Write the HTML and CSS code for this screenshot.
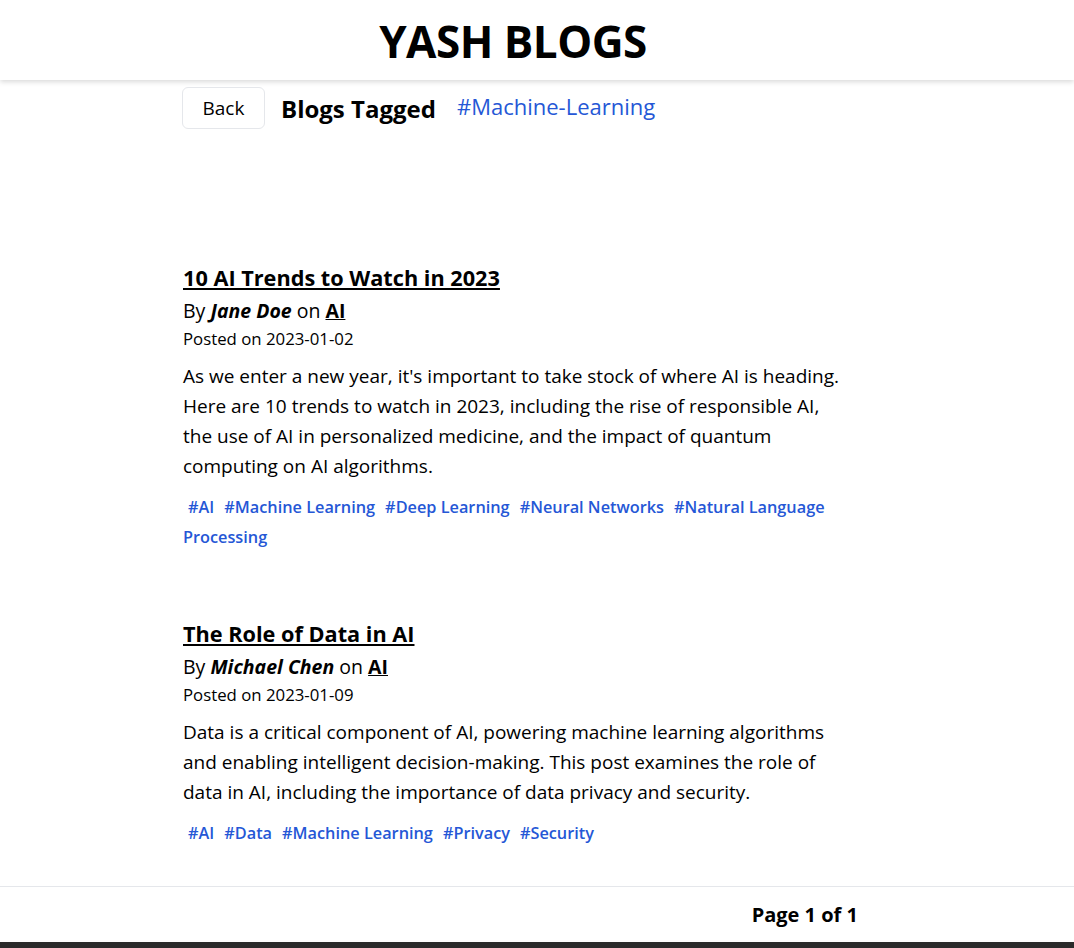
FILE: index.html
```html
<!DOCTYPE html>
<html lang="en">
<head>
<meta charset="utf-8">
<title>YASH BLOGS</title>
<link rel="stylesheet" href="styles.css">
</head>
<body>
<header class="site-header">
  <h1 class="site-title">YASH BLOGS</h1>
</header>
<main class="content">
  <div class="tag-bar">
    <button class="back-btn">Back</button>
    <h2 class="tag-heading">Blogs Tagged</h2>
    <span class="tag-name">#Machine-Learning</span>
  </div>
  <section class="posts">
    <article class="post">
      <h3 class="post-title"><a href="#">10 AI Trends to Watch in 2023</a></h3>
      <p class="post-meta">By <strong><em>Jane Doe</em></strong> on <a class="cat" href="#">AI</a></p>
      <p class="post-date">Posted on 2023-01-02</p>
      <p class="post-body">As we enter a new year, it's important to take stock of where AI is heading. Here are 10 trends to watch in 2023, including the rise of responsible AI, the use of AI in personalized medicine, and the impact of quantum computing on AI algorithms.</p>
      <div class="post-tags"><span class="tag">#AI</span><span class="tag">#Machine Learning</span><span class="tag">#Deep Learning</span><span class="tag">#Neural Networks</span><span class="tag">#Natural Language Processing</span></div>
    </article>
    <article class="post">
      <h3 class="post-title"><a href="#">The Role of Data in AI</a></h3>
      <p class="post-meta">By <strong><em>Michael Chen</em></strong> on <a class="cat" href="#">AI</a></p>
      <p class="post-date">Posted on 2023-01-09</p>
      <p class="post-body">Data is a critical component of AI, powering machine learning algorithms and enabling intelligent decision-making. This post examines the role of data in AI, including the importance of data privacy and security.</p>
      <div class="post-tags"><span class="tag">#AI</span><span class="tag">#Data</span><span class="tag">#Machine Learning</span><span class="tag">#Privacy</span><span class="tag">#Security</span></div>
    </article>
  </section>
</main>
<footer class="pager">
  <span class="page-info">Page 1 of 1</span>
</footer>
<div class="bottom-bar"></div>
</body>
</html>
```
FILE: styles.css
```css
* { box-sizing: border-box; }
html, body { margin: 0; padding: 0; }
body {
  font-family: "Open Sans", "Noto Sans", sans-serif;
  color: #000;
  background: #fff;
  height: 948px;
  display: flex;
  flex-direction: column;
  overflow: hidden;
}
.site-header {
  height: 80px;
  display: flex;
  align-items: center;
  justify-content: center;
  padding-right: 48px;
  padding-top: 2px;
  box-shadow: 0 2px 5px rgba(0,0,0,0.15);
  position: relative;
  z-index: 1;
}
.site-title {
  margin: 0;
  font-size: 44px;
  font-weight: 700;
  letter-spacing: -0.5px;
}
.content {
  margin-left: 183px;
  width: 668px;
  flex: 1;
}
.tag-bar {
  display: flex;
  align-items: center;
  margin-top: 7px;
  height: 42px;
}
.back-btn {
  font: inherit;
  font-size: 19px;
  height: 42px;
  width: 83px;
  background: #fff;
  border: 1px solid #e5e7eb;
  border-radius: 6px;
  color: #000;
  margin-left: -1px;
  padding: 0;
}
.tag-heading {
  margin: 0 0 0 16px;
  font-size: 24px;
  font-weight: 700;
}
.tag-name {
  margin-left: 21px;
  font-size: 22px;
  color: #2557d6;
  position: relative;
  top: -2px;
}
.posts {
  margin-top: 134px;
  display: flex;
  flex-direction: column;
  gap: 67px;
}
.post-title {
  margin: 0;
  font-size: 21.7px;
  font-weight: 700;
  line-height: 30px;
}
.post-title a, .cat { color: #000; }
.post-meta {
  margin: 3px 0 0;
  font-size: 19.5px;
  line-height: 30px;
}
.cat { font-weight: 700; }
.post-date {
  margin: 1px 0 0;
  font-size: 16.8px;
  line-height: 24px;
}
.post-body {
  margin: 10px 0 0;
  font-size: 19px;
  line-height: 30px;
}
.post-tags {
  margin-top: 11px;
  font-size: 16.3px;
  line-height: 30px;
  font-weight: 600;
  color: #2557d6;
}
.tag { margin: 0 5px; }
.pager {
  border-top: 1px solid #e5e7eb;
  height: 56px;
  display: flex;
  align-items: center;
  justify-content: flex-end;
  padding-right: 216px;
}
.page-info {
  font-size: 20px;
  font-weight: 700;
}
.bottom-bar {
  height: 6px;
  background: #2b2b2b;
}
```
